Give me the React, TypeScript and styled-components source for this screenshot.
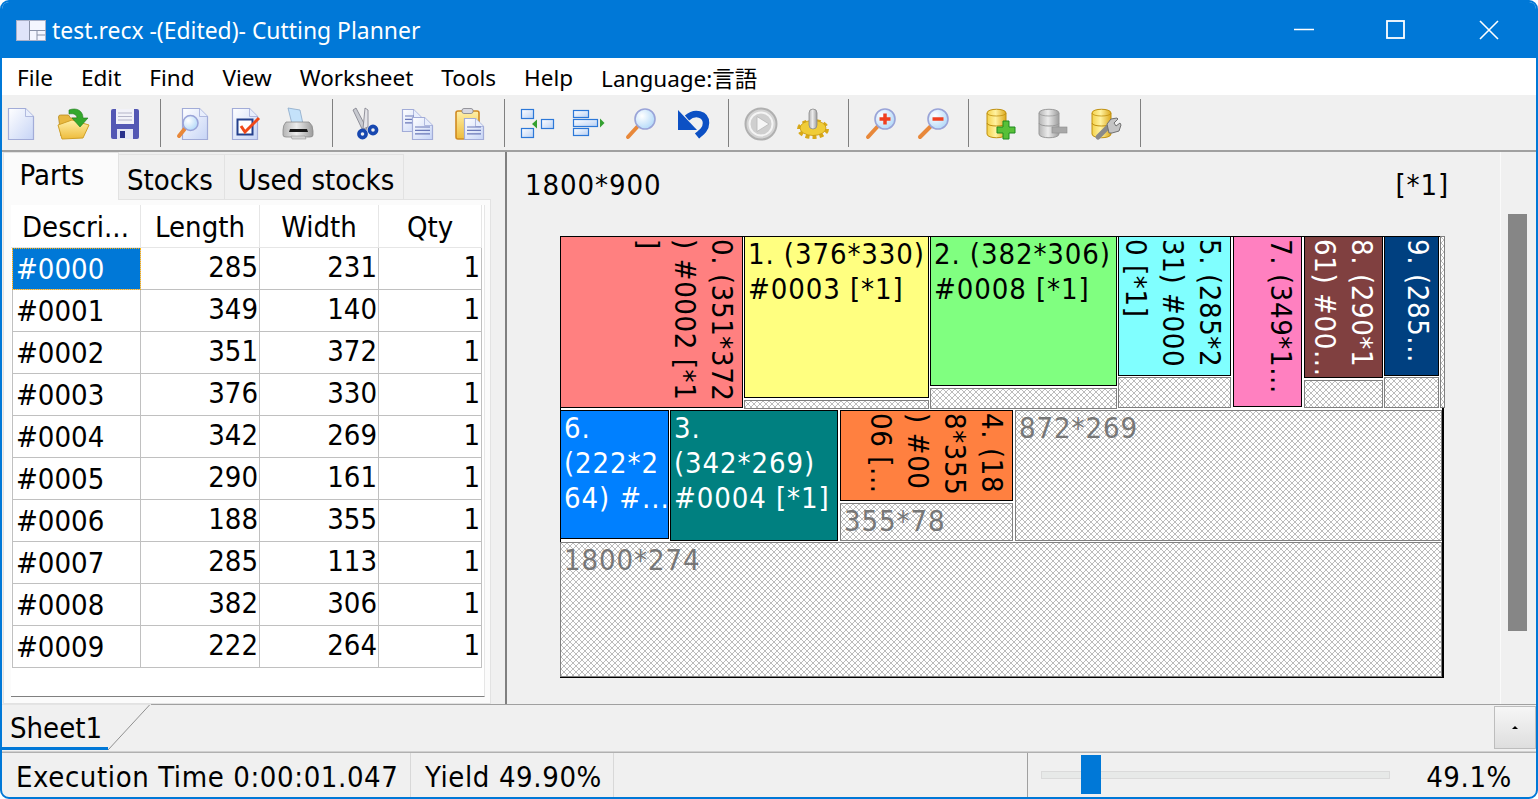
import React from "react";
import styled, { createGlobalStyle, css } from "styled-components";

const uiFont = `"DejaVu Sans Condensed", "DejaVu Sans", sans-serif`;
const menuFont = `"Noto Sans", "Noto Sans CJK JP", sans-serif`;

const GlobalStyle = createGlobalStyle`
  html, body {
    margin: 0;
    padding: 0;
    background: #fff;
    overflow: hidden;
  }
`;

const Window = styled.div`
  box-sizing: border-box;
  width: 1538px;
  height: 799px;
  display: flex;
  flex-direction: column;
  border: 2px solid #0078d7;
  border-radius: 9px;
  overflow: hidden;
  background: #f0f0f0;
  font-family: ${uiFont};
  font-stretch: condensed;
  font-size: 29px;
  color: #000;
`;

const TitleBar = styled.div`
  flex: 0 0 56px;
  display: flex;
  align-items: center;
  background: #0078d7;
  color: #fff;
  font-family: ${menuFont};
  font-size: 22.9px;
  padding-left: 14px;
`;

const TitleText = styled.span`
  margin-left: 6px;
  flex: 1;
`;

const WinButton = styled.button`
  width: 92.5px;
  height: 56px;
  display: flex;
  align-items: center;
  justify-content: center;
  padding: 0 2px 0 0;
  border: 0;
  background: transparent;
`;

const MenuBar = styled.div`
  flex: 0 0 37px;
  display: flex;
  align-items: center;
  gap: 28px;
  padding: 2px 0 0 15px;
  box-sizing: border-box;
  background: #fff;
  font-family: ${menuFont};
  font-size: 22.5px;
`;

const Toolbar = styled.div`
  flex: 0 0 55px;
  display: flex;
  align-items: center;
  padding-left: 2px;
  margin-left: -1px;
  border-bottom: 2px solid #a0a0a0;
`;

const ToolGroup = styled.div`
  display: flex;
  align-items: center;
  gap: 16px;
  height: 48px;
  padding-right: 17px;
  margin-right: 14px;
  border-right: 1px solid #808080;
`;

const ToolIcon = styled.svg`
  width: 36px;
  height: 36px;
  display: block;
`;

const Main = styled.div`
  flex: 1;
  min-height: 0;
  display: flex;
`;

const LeftPanel = styled.div`
  box-sizing: border-box;
  width: 505px;
  display: flex;
  flex-direction: column;
  padding-left: 1px;
  border-right: 2px solid #808080;
`;

const TabStrip = styled.div`
  flex: 0 0 47px;
  display: flex;
  align-items: flex-end;
`;

const Tab = styled.div<{ $active?: boolean; $pad?: string }>`
  box-sizing: border-box;
  display: flex;
  justify-content: center;
  border: 1px solid #e2e2e2;
  border-bottom: 0;
  ${(p) =>
    p.$active
      ? css`
          width: 116px;
          height: 48px;
          padding: 5px 18px 0 0;
          background: #fbfbfb;
          position: relative;
          z-index: 1;
          margin-bottom: -1px;
        `
      : css`
          height: 45px;
          padding: ${p.$pad};
          margin-left: -1px;
          background: #f0f0f0;
        `}
`;

const TabPane = styled.div`
  box-sizing: border-box;
  width: 488px;
  flex: 1;
  padding: 5px 5px 6px 7px;
  background: #fbfbfb;
  border: 1px solid #e2e2e2;
`;

const PartsGrid = styled.div`
  height: 100%;
  box-sizing: border-box;
  background: #fff;
  border-bottom: 1px solid #808080;
  border-right: 1px solid #e6e6e6;
`;

const GridRow = styled.div<{ $head?: boolean }>`
  display: grid;
  grid-template-columns: ${(p) => (p.$head ? "130px" : "129px")} 119px 119px 103px;
  height: ${(p) => (p.$head ? "43px" : "42px")};
  margin-left: ${(p) => (p.$head ? "0" : "1px")};
`;

const HeadCell = styled.div`
  display: flex;
  align-items: center;
  justify-content: center;
  padding-top: 2px;
  box-sizing: border-box;
  border-right: 1px solid #e6e6e6;
  border-bottom: 1px solid #e6e6e6;
`;

const Cell = styled.div<{ $num?: boolean; $selected?: boolean }>`
  box-sizing: border-box;
  display: flex;
  align-items: center;
  justify-content: ${(p) => (p.$num ? "flex-end" : "flex-start")};
  padding: ${(p) => (p.$num ? "0 1px 3px 0" : "1px 0 0 3px")};
  border-right: 1px solid #c0c0c0;
  border-bottom: 1px solid #c0c0c0;
  ${(p) => !p.$num && "border-left: 1px solid #c0c0c0;"}
  ${(p) =>
    p.$selected &&
    css`
      background: #0078d7;
      color: #fff;
      outline: 1px dotted #ffb000;
      outline-offset: -1px;
    `}
`;

const RightPanel = styled.div`
  flex: 1;
  min-width: 0;
  display: flex;
`;

const SheetArea = styled.div`
  flex: 1;
  padding: 15px 0 0 18px;
`;

const SheetHead = styled.div`
  width: 924px;
  height: 36px;
  display: flex;
  align-items: center;
  justify-content: space-between;
  margin-bottom: 33px;
  letter-spacing: 0.9px;
`;

const Board = styled.div`
  position: relative;
  box-sizing: border-box;
  width: 884px;
  height: 442px;
  margin-left: 35px;
  background: #fff;
  border: 1px solid #000;
  border-right-width: 2px;
  border-bottom-width: 2px;
  letter-spacing: 0.9px;
`;

const hatch = css`
  background-color: #fff;
  background-image: linear-gradient(45deg, transparent 42%, #bcbcbc 42% 58%, transparent 58%),
    linear-gradient(-45deg, transparent 42%, #bcbcbc 42% 58%, transparent 58%);
  background-size: 6px 6px;
`;

const Piece = styled.div<{
  $x: number;
  $y: number;
  $w: number;
  $h: number;
  $bg?: string;
  $light?: boolean;
  $vertical?: boolean;
}>`
  position: absolute;
  box-sizing: border-box;
  left: ${(p) => p.$x - 561}px;
  top: ${(p) => p.$y - 237}px;
  width: ${(p) => p.$w}px;
  height: ${(p) => p.$h}px;
  overflow: hidden;
  white-space: nowrap;
  border: 1px solid ${(p) => (p.$bg ? "#000" : "#808080")};
  color: ${(p) => (p.$bg ? (p.$light ? "#fff" : "#000") : "#777")};
  ${(p) => (p.$bg ? `background: ${p.$bg};` : hatch)}
  ${(p) =>
    p.$vertical
      ? css`
          writing-mode: vertical-rl;
          line-height: 37px;
          letter-spacing: 0.6px;
          padding: 2px 2px 0 0;
        `
      : css`
          line-height: 35px;
          padding: 0 0 0 3px;
        `}
`;

const PieceLine = styled.span`
  display: block;
`;

const ScrollTrack = styled.div`
  width: 36px;
  border-left: 1px solid #fafafa;
  padding: 62px 0 0 7px;
  box-sizing: border-box;
`;

const ScrollThumb = styled.div`
  width: 19px;
  height: 417px;
  background: #868686;
`;

const SheetStrip = styled.div`
  flex: 0 0 48px;
  display: flex;
  box-sizing: border-box;
  border-bottom: 1px solid #d0d0d0;
`;

const SheetTab = styled.div`
  box-sizing: border-box;
  width: 106px;
  height: 46px;
  padding: 6px 0 0 8px;
  line-height: 34px;
  border-top: 1px solid #e4e4e4;
  border-bottom: 3px solid #0078d7;
`;

const SheetSlant = styled.svg`
  width: 43px;
  height: 46px;
  display: block;
`;

const StripRest = styled.div`
  flex: 1;
  border-top: 1px solid #a0a0a0;
  display: flex;
  justify-content: flex-end;
  align-items: flex-start;
`;

const StripButton = styled.div`
  box-sizing: border-box;
  width: 42px;
  height: 43px;
  margin-top: 1px;
  display: flex;
  align-items: center;
  justify-content: center;
  border: 1px solid #bdbdbd;
  background: linear-gradient(#f6f6f6, #dedede);
`;

const UpArrow = styled.span`
  width: 0;
  height: 0;
  border-left: 3px solid transparent;
  border-right: 3px solid transparent;
  border-bottom: 3px solid #000;
`;

const StatusBar = styled.div`
  flex: 0 0 45px;
  display: flex;
  align-items: stretch;
  border-top: 1px solid #b0b0b0;
  box-sizing: border-box;
  font-size: 29px;
  letter-spacing: 0.6px;
`;

const StatusPane = styled.div<{ $width: number }>`
  box-sizing: border-box;
  width: ${(p) => p.$width}px;
  display: flex;
  align-items: center;
  padding: 3px 0 0 14px;
  border-right: 1px solid #d8d8d8;
`;

const StatusFill = styled.div`
  flex: 1;
  border-right: 1px solid #a0a0a0;
`;

const ZoomPane = styled.div`
  width: 508px;
  display: flex;
  align-items: center;
  justify-content: space-between;
  padding: 3px 24px 0 13px;
  box-sizing: border-box;
`;

const SliderTrack = styled.div`
  position: relative;
  box-sizing: border-box;
  width: 349px;
  height: 8px;
  margin-top: -3px;
  background: #e7e9e8;
  border: 1px solid #dadada;
`;

const SliderThumb = styled.div`
  position: absolute;
  left: 39px;
  top: -17px;
  width: 20px;
  height: 39px;
  background: #0078d7;
`;

const IconDefs = styled.svg`
  position: absolute;
  width: 0;
  height: 0;
`;

const Defs = () => (
  <IconDefs aria-hidden="true">
    <defs>
      <linearGradient id="pg" x1="0" y1="0" x2="1" y2="1">
        <stop offset="0" stopColor="#ffffff" />
        <stop offset="1" stopColor="#c6d4f6" />
      </linearGradient>
      <linearGradient id="yl" x1="0" y1="0" x2="1" y2="0">
        <stop offset="0" stopColor="#f4d24a" />
        <stop offset="0.45" stopColor="#fff2a0" />
        <stop offset="1" stopColor="#dca81c" />
      </linearGradient>
      <linearGradient id="gy" x1="0" y1="0" x2="1" y2="0">
        <stop offset="0" stopColor="#b4b4b4" />
        <stop offset="0.45" stopColor="#ececec" />
        <stop offset="1" stopColor="#9c9c9c" />
      </linearGradient>
      <linearGradient id="fo" x1="0" y1="0" x2="0" y2="1">
        <stop offset="0" stopColor="#fff0a8" />
        <stop offset="1" stopColor="#eebc3c" />
      </linearGradient>
      <radialGradient id="ln" cx="0.35" cy="0.35" r="0.8">
        <stop offset="0" stopColor="#ffffff" />
        <stop offset="1" stopColor="#a8d4f8" />
      </radialGradient>
      <linearGradient id="rowfill" x1="0" y1="0" x2="1" y2="1">
        <stop offset="0" stopColor="#ffffff" />
        <stop offset="1" stopColor="#b8d0f4" />
      </linearGradient>
    </defs>
  </IconDefs>
);

const Page = ({ x, y, w, h }: { x: number; y: number; w: number; h: number }) => (
  <>
    <path
      d={`M${x} ${y}H${x + w - 8}L${x + w} ${y + 8}V${y + h}H${x}Z`}
      fill="url(#pg)"
      stroke="#a2acd8"
      strokeWidth="1.2"
    />
    <path d={`M${x + w - 8} ${y}V${y + 8}H${x + w}`} fill="#e8eefc" stroke="#a2acd8" strokeWidth="0.8" />
  </>
);

const TextLines = ({ x, y, w, n }: { x: number; y: number; w: number; n: number }) => (
  <path
    d={Array.from({ length: n }, (_, i) => `M${x} ${y + i * 3.4}h${w}`).join("")}
    stroke="#6a78b8"
    strokeWidth="1.2"
  />
);

const Lens = ({ cx, cy, r, ex, ey }: { cx: number; cy: number; r: number; ex: number; ey: number }) => (
  <>
    <path d={`M${cx - r * 0.7} ${cy + r * 0.7}L${ex} ${ey}`} stroke="#e8883a" strokeWidth="4" strokeLinecap="round" />
    <circle cx={cx} cy={cy} r={r} fill="url(#ln)" stroke="#9aa4d8" strokeWidth="1.6" />
  </>
);

const Cylinder = ({ x, w, fill, edge }: { x: number; w: number; fill: string; edge: string }) => (
  <>
    <path
      d={`M${x} 8c0-5 ${w}-5 ${w} 0v21c0 5-${w} 5-${w} 0Z`}
      fill={`url(#${fill})`}
      stroke={edge}
      strokeWidth="1"
    />
    <path d={`M${x} 18c0 4 ${w} 4 ${w} 0`} fill="none" stroke={edge} strokeWidth="1" />
    <path d={`M${x} 8c0 4 ${w} 4 ${w} 0`} fill="none" stroke={edge} strokeWidth="0.8" />
  </>
);

const OutlineRect = ({ x, y, w, h }: { x: number; y: number; w: number; h: number }) => (
  <rect x={x} y={y} width={w} height={h} fill="url(#rowfill)" stroke="#2c78d8" strokeWidth="1.2" />
);

const toolIcons: React.ReactNode[][] = [
  [
    <Page x={5.5} y={3.5} w={25} h={31} />,
    <>
      <path d="M6 31L3.5 12q0-2 2-2h8l2 3h8v6H6Z" fill="#e8b840" stroke="#b88a20" strokeWidth="0.8" />
      <path d="M7 34L3 20l14-5 17 5-6 13Z" fill="url(#fo)" stroke="#d0a028" strokeWidth="1" />
      <path d="M14 5C22 2 28 6 28 13h5l-8 9-8-9h5C22 10 19 8 14 9Z" fill="#34a82c" stroke="#1e7a1c" strokeWidth="0.6" />
    </>,
    <>
      <rect x="4" y="4" width="28" height="30" rx="2" fill="#5458b4" />
      <rect x="9" y="4" width="18" height="15" fill="#f2f2f8" />
      <path d="M11 8h14M11 11.5h14M11 15h14" stroke="#b4b4c8" strokeWidth="1.2" />
      <rect x="10" y="24" width="16" height="10" fill="#e4e6f4" />
      <rect x="13" y="26" width="5" height="7" fill="#28308c" />
    </>,
  ],
  [
    <>
      <Page x={7.5} y={3.5} w={25} h={31} />
      <Lens cx={15.5} cy={18} r={7.5} ex={4} ey={31} />
    </>,
    <>
      <Page x={5.5} y={3.5} w={25} h={31} />
      <rect x="10.5" y="14.5" width="15" height="15" fill="#fff" stroke="#24408c" strokeWidth="2" />
      <path d="M14 21l4 6L32 13" fill="none" stroke="#f04818" strokeWidth="3" />
    </>,
    <>
      <path d="M9 3L21 5l3 14H13Z" fill="#c4e2fa" stroke="#8ca8c8" strokeWidth="0.8" />
      <path d="M7 17h23q4 3 4 9v4q0 2-3 2H7q-3 0-3-2v-5q0-5 3-8Z" fill="url(#gy)" stroke="#8a8a8a" strokeWidth="0.8" />
      <path d="M11 24h17l1 3H10Z" fill="#181818" />
      <path d="M12 31h14l1 3H13Z" fill="#d4d4d4" stroke="#8a8a8a" strokeWidth="0.5" />
    </>,
  ],
  [
    <>
      <path d="M6 5L9 3L20 24L16 26Z" fill="#c8cad0" stroke="#7c7c88" strokeWidth="0.8" />
      <path d="M18 3L21 5L21 22L16 24Z" fill="#e4e4e8" stroke="#7c7c88" strokeWidth="0.8" />
      <circle cx="15.5" cy="29" r="3.6" fill="none" stroke="#1848b0" strokeWidth="3.6" />
      <circle cx="26" cy="25" r="3.6" fill="none" stroke="#1848b0" strokeWidth="3.6" />
    </>,
    <>
      <Page x={3.5} y={4.5} w={19} h={22} />
      <TextLines x={6} y={11} w={9} n={3} />
      <Page x={13.5} y={12.5} w={20} h={22} />
      <TextLines x={16} y={22} w={15} n={3} />
    </>,
    <>
      <rect x="5" y="6" width="23" height="28" rx="2" fill="url(#fo)" stroke="#d08a20" strokeWidth="1.6" />
      <rect x="11" y="3.5" width="11" height="5" rx="2" fill="#d8d8e0" stroke="#808088" strokeWidth="0.8" />
      <Page x={13.5} y={13.5} w={19} h={21} />
      <TextLines x={16} y={22} w={14} n={3} />
    </>,
  ],
  [
    <>
      <OutlineRect x={2.5} y={4.5} w={12} h={9} />
      <OutlineRect x={2.5} y={23.5} w={12} h={9} />
      <OutlineRect x={22.5} y={14.5} w={12} h={9} />
      <path d="M13 19l5-4.5v9Z" fill="#34a030" />
    </>,
    <>
      <OutlineRect x={2.5} y={5.5} w={15} h={7} />
      <OutlineRect x={2.5} y={14.5} w={24} h={7} />
      <OutlineRect x={2.5} y={23.5} w={15} h={7} />
      <path d="M29 13.5l4.5 4.5-4.5 4.5Z" fill="#34a030" />
    </>,
    <Lens cx={22} cy={14} r={10} ex={5} ey={32} />,
    <>
      <path d="M12 13C20 6 31 9 31 18C31 24 27 27 22 31" fill="none" stroke="#0c50c4" strokeWidth="6.5" />
      <path d="M3 5V25H22Z" fill="#0c50c4" />
    </>,
  ],
  [
    <>
      <circle cx="18" cy="19" r="15.5" fill="#d4d4d4" stroke="#b0b0b0" strokeWidth="2" />
      <circle cx="18" cy="19" r="11.5" fill="#cfcfcf" stroke="#f4f4f4" strokeWidth="2" />
      <path d="M14 11.5L26 19L14 26.5Z" fill="#f6f6f6" stroke="#b8b8b8" strokeWidth="0.8" />
    </>,
    <>
      <ellipse cx="18" cy="24" rx="14" ry="8" fill="none" stroke="#d8a818" strokeWidth="4" strokeDasharray="4 3" />
      <ellipse cx="18" cy="23" rx="13" ry="7.5" fill="#f0cc38" stroke="#c89810" strokeWidth="0.8" />
      <rect x="14" y="4" width="8" height="20" rx="4" fill="url(#gy)" stroke="#8c8c8c" strokeWidth="0.8" />
    </>,
  ],
  [
    <>
      <Lens cx={22} cy={14} r={10} ex={5} ey={32} />
      <path d="M22 8.5v11M16.5 14h11" stroke="#f04020" strokeWidth="3.5" />
    </>,
    <>
      <Lens cx={23} cy={14} r={10} ex={5} ey={32} />
      <path d="M17.5 14h11" stroke="#f04020" strokeWidth="3.5" />
    </>,
  ],
  [
    <>
      <Cylinder x={4} w={19} fill="yl" edge="#c09010" />
      <path d="M20 16h6v6h6v6h-6v6h-6v-6h-6v-6h6Z" fill="#58c038" stroke="#1e8a1e" strokeWidth="1" />
    </>,
    <>
      <Cylinder x={4} w={20} fill="gy" edge="#9a9a9a" />
      <rect x="17" y="22" width="15" height="6" fill="#a8a8a8" stroke="#8c8c8c" strokeWidth="0.6" />
    </>,
    <>
      <Cylinder x={5} w={19} fill="yl" edge="#c09010" />
      <path d="M11 32L21 22" stroke="#8a8a8a" strokeWidth="5" strokeLinecap="round" />
      <path d="M20 19l4-5 6-1 1 1-4 4 2 3 4-3 1 2-2 6-7 2-3 0Z" fill="#c4c4c4" stroke="#707070" strokeWidth="1" />
    </>,
  ],
];

const parts = [
  ["#0000", 285, 231],
  ["#0001", 349, 140],
  ["#0002", 351, 372],
  ["#0003", 376, 330],
  ["#0004", 342, 269],
  ["#0005", 290, 161],
  ["#0006", 188, 355],
  ["#0007", 285, 113],
  ["#0008", 382, 306],
  ["#0009", 222, 264],
];

type Cut = {
  x: number;
  y: number;
  w: number;
  h: number;
  bg?: string;
  light?: boolean;
  vertical?: boolean;
  lines?: string[];
};

const cuts: Cut[] = [
  { x: 560, y: 236, w: 183, h: 172, bg: "#ff8080", vertical: true, lines: ["0. (351*372", ") #0002 [*1", "]"] },
  { x: 744, y: 236, w: 185, h: 162, bg: "#ffff80", lines: ["1. (376*330)", "#0003 [*1]"] },
  { x: 744, y: 400, w: 185, h: 9 },
  { x: 930, y: 236, w: 187, h: 150, bg: "#80ff80", lines: ["2. (382*306)", "#0008 [*1]"] },
  { x: 930, y: 388, w: 187, h: 21 },
  { x: 1118, y: 236, w: 113, h: 140, bg: "#80ffff", vertical: true, lines: ["5. (285*2", "31) #000", "0 [*1]"] },
  { x: 1118, y: 377, w: 113, h: 31 },
  { x: 1233, y: 236, w: 69, h: 171, bg: "#ff80c0", vertical: true, lines: ["7. (349*1..."] },
  { x: 1304, y: 236, w: 79, h: 142, bg: "#804040", light: true, vertical: true, lines: ["8. (290*1", "61) #00..."] },
  { x: 1304, y: 380, w: 79, h: 28 },
  { x: 1384, y: 236, w: 55, h: 140, bg: "#004080", light: true, vertical: true, lines: ["9. (285..."] },
  { x: 1384, y: 377, w: 55, h: 31 },
  { x: 1440, y: 236, w: 2, h: 172 },
  { x: 560, y: 410, w: 109, h: 129, bg: "#0080ff", light: true, lines: ["6.", "(222*2", "64) #..."] },
  { x: 670, y: 410, w: 168, h: 131, bg: "#008080", light: true, lines: ["3.", "(342*269)", "#0004 [*1]"] },
  { x: 840, y: 410, w: 173, h: 91, bg: "#ff8040", vertical: true, lines: ["4. (18", "8*355", ") #00", "06 [..."] },
  { x: 840, y: 503, w: 173, h: 38, lines: ["355*78"] },
  { x: 1015, y: 410, w: 427, h: 131, lines: ["872*269"] },
  { x: 560, y: 542, w: 882, h: 135, lines: ["1800*274"] },
];

const menus = ["File", "Edit", "Find", "View", "Worksheet", "Tools", "Help", "Language:言語"];

export default function App() {
  return (
    <>
      <GlobalStyle />
      <Defs />
      <Window>
        <TitleBar>
          <svg width="30" height="21" viewBox="0 0 30 21">
            <rect x="0.5" y="0.5" width="29" height="20" fill="#f4f6ff" stroke="#a8b0c8" />
            <rect x="1" y="1" width="12" height="19" fill="#dfe4fa" />
            <path d="M13.5 1v19M13.5 10.5h16M21 10.5v9.5M21 15h8" stroke="#8a92a8" fill="none" />
          </svg>
          <TitleText>test.recx -(Edited)- Cutting Planner</TitleText>
          <WinButton aria-label="Minimize">
            <svg width="20" height="20" viewBox="0 0 20 20">
              <path d="M0 9.5h20" stroke="#fff" strokeWidth="1.6" />
            </svg>
          </WinButton>
          <WinButton aria-label="Maximize">
            <svg width="20" height="20" viewBox="0 0 20 20">
              <rect x="1" y="1" width="17" height="17" fill="none" stroke="#fff" strokeWidth="1.8" />
            </svg>
          </WinButton>
          <WinButton aria-label="Close">
            <svg width="20" height="20" viewBox="0 0 20 20">
              <path d="M1 1l18 18M19 1L1 19" stroke="#fff" strokeWidth="1.6" />
            </svg>
          </WinButton>
        </TitleBar>

        <MenuBar>
          {menus.map((m) => (
            <span key={m}>{m}</span>
          ))}
        </MenuBar>

        <Toolbar>
          {toolIcons.map((group, i) => (
            <ToolGroup key={i}>
              {group.map((icon, j) => (
                <ToolIcon key={j} viewBox="0 0 36 36">
                  {icon}
                </ToolIcon>
              ))}
            </ToolGroup>
          ))}
        </Toolbar>

        <Main>
          <LeftPanel>
            <TabStrip>
              <Tab $active>Parts</Tab>
              <Tab $pad="8px 11px 0 8px">Stocks</Tab>
              <Tab $pad="8px 9px 0 13px">Used stocks</Tab>
            </TabStrip>
            <TabPane>
              <PartsGrid>
                <GridRow $head>
                  <HeadCell>Descri...</HeadCell>
                  <HeadCell>Length</HeadCell>
                  <HeadCell>Width</HeadCell>
                  <HeadCell>Qty</HeadCell>
                </GridRow>
                {parts.map(([name, length, width], i) => (
                  <GridRow key={name}>
                    <Cell $selected={i === 0}>{name}</Cell>
                    <Cell $num>{length}</Cell>
                    <Cell $num>{width}</Cell>
                    <Cell $num>1</Cell>
                  </GridRow>
                ))}
              </PartsGrid>
            </TabPane>
          </LeftPanel>

          <RightPanel>
            <SheetArea>
              <SheetHead>
                <span>1800*900</span>
                <span>[*1]</span>
              </SheetHead>
              <Board>
                {cuts.map((c) => (
                  <Piece
                    key={`${c.x}-${c.y}`}
                    $x={c.x}
                    $y={c.y}
                    $w={c.w}
                    $h={c.h}
                    $bg={c.bg}
                    $light={c.light}
                    $vertical={c.vertical}
                  >
                    {c.lines?.map((line) => (
                      <PieceLine key={line}>{line}</PieceLine>
                    ))}
                  </Piece>
                ))}
              </Board>
            </SheetArea>
            <ScrollTrack>
              <ScrollThumb />
            </ScrollTrack>
          </RightPanel>
        </Main>

        <SheetStrip>
          <SheetTab>Sheet1</SheetTab>
          <SheetSlant viewBox="0 0 43 46">
            <path d="M0 46L42 0.5" stroke="#909090" strokeWidth="1" fill="none" />
            <path d="M0 0.5H43" stroke="#e4e4e4" strokeWidth="1" />
          </SheetSlant>
          <StripRest>
            <StripButton>
              <UpArrow />
            </StripButton>
          </StripRest>
        </SheetStrip>

        <StatusBar>
          <StatusPane $width={409}>Execution Time 0:00:01.047</StatusPane>
          <StatusPane $width={203}>Yield 49.90%</StatusPane>
          <StatusFill />
          <ZoomPane>
            <SliderTrack>
              <SliderThumb />
            </SliderTrack>
            <span>49.1%</span>
          </ZoomPane>
        </StatusBar>
      </Window>
    </>
  );
}
